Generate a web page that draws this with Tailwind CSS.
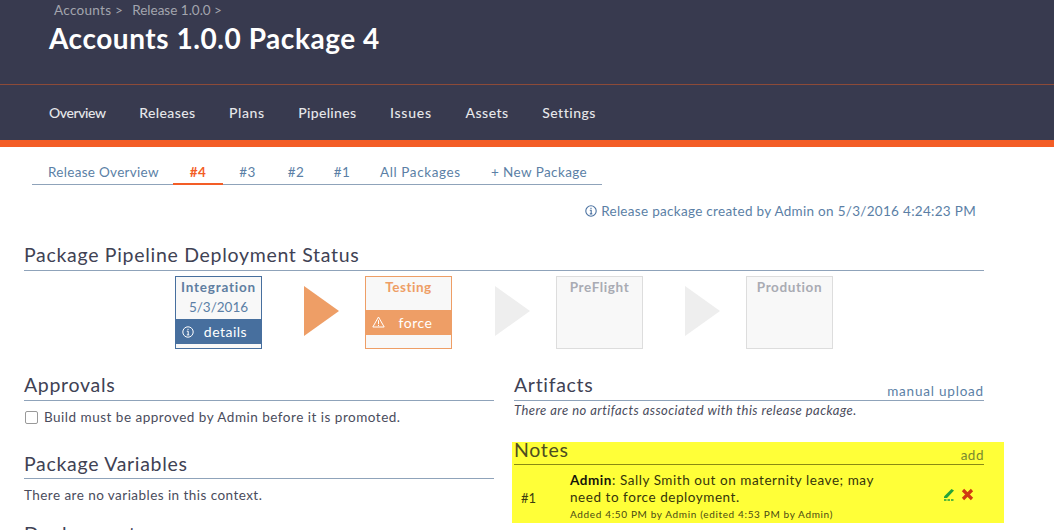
<!DOCTYPE html>
<html lang="en">
<head>
    <meta charset="UTF-8">
    <title>Accounts 1.0.0 Package 4</title>
    <script src="https://cdn.jsdelivr.net/npm/@tailwindcss/browser@4"></script>
</head>
<body class="h-[530px] overflow-hidden bg-white font-['Lato',sans-serif] text-[#3f4254]">

    <!-- header -->
    <header class="h-[84px] bg-[#383a4f] pl-[49px] border-b border-[#8c4a38] box-content">
        <div class="flex gap-[9px] pl-[5px] pt-[1px] text-[13.5px] leading-[18px] tracking-[0.3px] text-[#a3a5ae]">
            <span>Accounts &gt;</span>
            <span class="tracking-[0px]">Release 1.0.0 &gt;</span>
        </div>
        <h1 class="mt-[3px] text-[28px] leading-[32px] font-bold text-white tracking-[0.55px]">Accounts 1.0.0 Package 4</h1>
    </header>
    <nav class="flex h-[55px] items-center gap-[33.5px] bg-[#383a4f] pl-[49px] text-[14px] font-medium text-[#e6e7ea] border-b-[7px] border-[#f35d26] box-content">
        <span class="tracking-[-0.4px]">Overview</span>
        <span class="tracking-[0.4px]">Releases</span>
        <span class="tracking-[0.6px]">Plans</span>
        <span class="tracking-[0.33px]">Pipelines</span>
        <span class="tracking-[0.8px]">Issues</span>
        <span class="tracking-[0.5px]">Assets</span>
        <span class="tracking-[0.5px]">Settings</span>
    </nav>

    <!-- package tabs -->
    <div class="ml-[32px] mt-[15px] flex h-[23px] w-[570px] border-b border-[#8fa3ba] text-[13.5px] tracking-[0.3px] text-[#5b7fa6]">
        <span class="ml-[16px] w-[125px] leading-[20px]">Release Overview</span>
        <span class="h-[23px] w-[50px] border-b-[2px] border-[#f35d26] text-center font-bold leading-[20px] text-[#f35d26]">#4</span>
        <span class="w-[49px] text-center leading-[20px]">#3</span>
        <span class="w-[48px] text-center leading-[20px]">#2</span>
        <span class="w-[44px] text-center leading-[20px]">#1</span>
        <span class="ml-[16px] w-[111px] leading-[20px] tracking-[0.6px]">All Packages</span>
        <span class="leading-[20px] tracking-[0.4px]">+ New Package</span>
    </div>

    <div class="mr-[78px] mt-[17px] flex items-center justify-end gap-[4px] text-[13.5px] leading-[18px] tracking-[0.3px] text-[#5b7fa6]">
        <svg width="12" height="12" viewBox="0 0 12 12" fill="none" stroke="#4a71a0"><circle cx="6" cy="6" r="5.2" stroke-width="1.1"/><path d="M4.8 5.2H6.2V8.8M4.8 8.9H7.3M6 2.8V4" stroke-width="1.1"/></svg>
        <span>Release package created by Admin on 5/3/2016 4:24:23 PM</span>
    </div>

    <div class="px-[24px] pr-[70px]">
        <!-- pipeline status -->
        <h2 class="mt-[23px] h-[28px] border-b border-[#8fa3ba] text-[19.5px] leading-[24px] tracking-[0.7px]">Package Pipeline Deployment Status</h2>
        <div class="ml-[151px] mt-[5px] flex items-start">
            <div class="h-[73px] w-[87px] border border-[#476f9e] bg-[#f8f8f8] text-center text-[#5b7fa6]">
                <div class="h-[21px] text-[13.5px] font-bold leading-[20px] tracking-[0.8px] text-[#5f7ea1]">Integration</div>
                <div class="h-[14px] text-[13.5px] leading-[15px] pt-[2px] box-content">5/3/2016</div>
                <div class="relative mt-[5px] h-[25px] bg-[#476f9e] text-[14px] leading-[25px] tracking-[0.5px] text-white pl-[14px]">
                    <svg class="absolute left-[6px] top-[7px]" width="12" height="12" viewBox="0 0 12 12" fill="none" stroke="#fff"><circle cx="6" cy="6" r="5.2" stroke-width="1"/><path d="M4.8 5.2H6.2V8.8M4.8 8.9H7.3M6 2.8V4" stroke-width="1"/></svg>
                    details
                </div>
            </div>
            <div class="ml-[42px] mt-[10px] h-0 w-0 border-y-[25px] border-l-[35px] border-y-transparent border-l-[#ee9e66]"></div>
            <div class="ml-[26px] h-[73px] w-[87px] border border-[#ee9e66] bg-[#f8f8f8] text-center">
                <div class="h-[33px] text-[13.5px] font-bold leading-[20px] tracking-[0.5px] text-[#ee9e66]">Testing</div>
                <div class="relative h-[25px] bg-[#ee9e66] text-[14px] leading-[25px] tracking-[0.5px] text-white pl-[14px]">
                    <svg class="absolute left-[6px] top-[6px]" width="13" height="12" viewBox="0 0 13 12" fill="none" stroke="#fff"><path d="M6.5 1L12.2 11H.8Z" stroke-width="1"/><path d="M6.5 4.2V8M6.5 8.8V10" stroke-width="1"/></svg>
                    force
                </div>
            </div>
            <div class="ml-[43px] mt-[10px] h-0 w-0 border-y-[25px] border-l-[35px] border-y-transparent border-l-[#eeeeee]"></div>
            <div class="ml-[26px] h-[73px] w-[87px] border border-[#dddddd] bg-[#f8f8f8] text-center text-[13.5px] font-bold leading-[20px] tracking-[0.6px] text-[#a9abb3]">PreFlight</div>
            <div class="ml-[42px] mt-[10px] h-0 w-0 border-y-[25px] border-l-[35px] border-y-transparent border-l-[#eeeeee]"></div>
            <div class="ml-[26px] h-[73px] w-[87px] border border-[#dddddd] bg-[#f8f8f8] text-center text-[13.5px] font-bold leading-[20px] tracking-[0.6px] text-[#a9abb3]">Prodution</div>
        </div>

        <div class="mt-[24px] flex gap-[20px]">
            <!-- left column -->
            <div class="w-[470px]">
                <h2 class="h-[28px] border-b border-[#8fa3ba] text-[19.5px] leading-[24px] tracking-[0.7px]">Approvals</h2>
                <div class="mt-[7px] flex h-[18px] items-center text-[13.5px] tracking-[0.5px] text-[#4a4c5c]">
                    <span class="ml-[1px] mr-[6px] h-[13px] w-[13px] rounded-[2px] border border-[#999999] bg-white"></span>
                    Build must be approved by Admin before it is promoted.
                </div>
                <h2 class="mt-[26px] h-[27px] border-b border-[#8fa3ba] text-[19.5px] leading-[24px] tracking-[0.7px]">Package Variables</h2>
                <p class="mt-[7px] text-[13.5px] leading-[18px] tracking-[0.45px] text-[#4a4c5c]">There are no variables in this context.</p>
                <h2 class="mt-[17px] text-[19.5px] leading-[26px] tracking-[0.7px]">Deployments</h2>
            </div>
            <!-- right column -->
            <div class="w-[470px]">
                <div class="flex h-[28px] items-end justify-between border-b border-[#8fa3ba]">
                    <h2 class="mb-[3px] text-[19.5px] leading-[24px] tracking-[0.7px]">Artifacts</h2>
                    <a class="text-[13.5px] leading-[18px] tracking-[0.8px] text-[#5b7fa6]">manual upload</a>
                </div>
                <p class="text-[13px] italic leading-[18px] tracking-[0.45px] text-[#4a4c5c]">There are no artifacts associated with this release package.</p>
                <div class="-mx-[2px] mt-[23px] h-[81px] w-[492px] bg-[#ffff38] px-[2px] text-[#4d4d20]">
                    <div class="flex h-[23px] w-[470px] items-end justify-between border-b border-[#8a8a14]">
                        <h2 class="mb-[3px] text-[19.5px] leading-[22px] tracking-[0.7px]">Notes</h2>
                        <a class="text-[13.5px] leading-[18px] tracking-[0.5px] text-[#7a8a30]">add</a>
                    </div>
                    <div class="flex w-[470px] items-center">
                        <span class="w-[56px] pl-[7px] pt-[10px] text-[13px] text-[#3d3d10]">#1</span>
                        <div class="w-[373px]">
                            <p class="w-[320px] pt-[7px] text-[13.5px] leading-[17px] tracking-[0.55px] text-[#35350a]"><b class="font-bold text-[#15150a]">Admin</b>: Sally Smith out on maternity leave; may need to force deployment.</p>
                            <p class="mt-[1px] text-[10px] leading-[15px] tracking-[0.65px] text-[#4a4a14]">Added 4:50 PM by Admin (edited 4:53 PM by Admin)</p>
                        </div>
                        <svg class="mt-[2px]" width="12" height="13" viewBox="0 0 12 13"><path d="M1 8.5L8.5 1L11 2.5L4 10H1Z" fill="#22a33a"/><path d="M1 12H3.5M4.5 12H7M8 12H10.5" stroke="#22a33a" stroke-width="1.5"/></svg>
                        <svg class="ml-[6px] mt-[2px]" width="13" height="13" viewBox="0 0 13 13"><path d="M2 2L11 11M11 2L2 11" stroke="#cf3a12" stroke-width="3.2"/></svg>
                    </div>
                </div>
            </div>
        </div>
    </div>
</body>
</html>
